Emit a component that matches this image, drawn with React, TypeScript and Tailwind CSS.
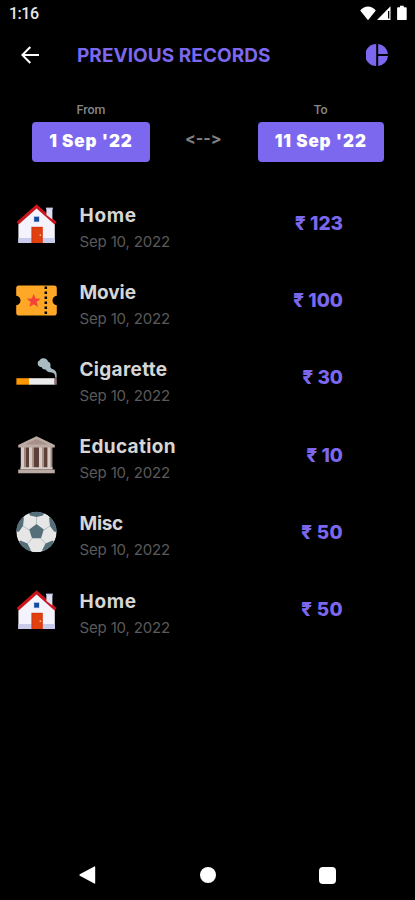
import type { ReactNode } from "react";
import clsx from "clsx";

type RecordItem = {
  name: string;
  nameClass: string;
  date: string;
  amount: string;
  amountClass?: string;
  icon: ReactNode;
};

function HouseIcon() {
  return (
    <svg viewBox="0 0 40 40" className="size-10 overflow-visible">
      <path d="M20.6 2 38.8 19.5V39H2.4V19.5z" fill="#f4f3fc" />
      <path d="M2.4 34h36.4v5H2.4z" fill="#c8cbea" />
      <path d="M20.6.2.6 18l2 2.4 18-16 18 16 2-2.4z" fill="#c9151b" />
      <path d="M30.4 4h6v11.5l-6-4.5z" fill="#dfe0f2" />
      <path d="M30 3.6h6.8v1.6H30z" fill="#c9cbea" />
      <path d="M15.4 22.8h11.4V39H15.4z" fill="#d6380f" />
      <path d="M16.8 24.2h8.6V39h-8.6z" fill="#e0410f" />
      <circle cx="24.4" cy="31.2" r="0.9" fill="#ffb27a" />
      <path d="M17.6 12.2h6v6h-6z" fill="#bcd0f0" />
      <path d="M18.2 12.8h4.8v4.8h-4.8z" fill="#134a9c" />
    </svg>
  );
}

function TicketIcon() {
  return (
    <svg viewBox="0 0 40 40" className="size-10 overflow-visible">
      <path
        d="M3 4.4h35a2.8 2.8 0 0 1 2.8 2.8v7.6c-2.6.4-4.3 2.2-4.3 4.7s1.7 4.3 4.3 4.7v7.6a2.8 2.8 0 0 1-2.8 2.8H3a2.8 2.8 0 0 1-2.8-2.8v-7.6c2.6-.4 4.3-2.2 4.3-4.7S2.8 15.2.2 14.8V7.2A2.8 2.8 0 0 1 3 4.4z"
        fill="#ffa726"
      />
      <path d="M29.8 5.5v29" stroke="#000" strokeWidth="2.5" strokeDasharray="2.5 2.5" />
      <path
        d="m17.7 12.8 1.9 4.7 5 .3-3.9 3.2 1.3 4.9-4.3-2.7-4.3 2.7 1.3-4.9-3.9-3.2 5-.3z"
        fill="#f44336"
      />
    </svg>
  );
}

function CigaretteIcon() {
  return (
    <svg viewBox="0 0 40 40" className="size-10 overflow-visible">
      <path
        d="M27 .2c2.6-.2 4.5 1.2 5 3.4 2 .6 2.9 2.4 2.4 4.3-.1 1.6.5 2.6 1.9 3 2.7.8 4.2 2.6 4.3 5.2l.1 3.6h-1.5c.1-3.3-.8-5-3.5-5.2-3 0-5.1-1-6-3-1.8.3-3.4-.5-3.9-2.2-2-.1-4-1.4-4.1-3.5 0-2 .8-3.2 2.2-3.5C24.2 1 25.4.3 27 .2z"
        fill="#a9bcc3"
      />
      <path d="M.4 20.2h13v6.5H.4z" fill="#ff9800" />
      <path d="M13 20.2h26v6.5H13z" fill="#ececec" />
      <path d="M38.2 20.2h2.6v6.5h-2.6z" fill="#8c7375" />
    </svg>
  );
}

function BankIcon() {
  return (
    <svg viewBox="0 0 40 40" className="size-10 overflow-visible">
      <path d="M5.5 11h30v22h-30z" fill="#5d4037" />
      <path d="M4.8 12h4.8v21H4.8zM13 12h4.8v21H13zM23 12h4.8v21H23zM31.4 12h4.8v21h-4.8z" fill="#d7ccc8" />
      <path d="M8 12h1.6v21H8zM16.2 12h1.6v21h-1.6zM26.2 12h1.6v21h-1.6zM34.6 12h1.6v21h-1.6z" fill="#a1887f" />
      <path d="M20.5 1.2 38.8 10v2.6H2.2V10z" fill="#bcaaa4" />
      <path d="M20.5 4 32 9.6H9z" fill="#a89189" />
      <path d="M4.4 32.2h32.2v2.2H4.4z" fill="#d7ccc8" />
      <path d="M2.2 34.4h36.6v3.8H2.2z" fill="#bcaaa4" />
    </svg>
  );
}

function BallIcon() {
  return (
    <svg viewBox="0 0 40 40" className="size-10 overflow-visible">
      <defs>
        <clipPath id="ball">
          <circle cx="20.5" cy="20" r="20.2" />
        </clipPath>
      </defs>
      <g clipPath="url(#ball)">
        <circle cx="20.5" cy="20" r="20.2" fill="#e6e6e6" />
        <path
          d="M20.5 12V4M28 18l6-4M25 26.5l4.5 5M16 26.5l-4.5 5M13 18l-6-4"
          stroke="#b4bcc0"
          fill="none"
        />
        <path d="m20.5 12 7.3 5.5-2.8 8.7h-9l-2.8-8.7z" fill="#546e7a" />
        <path
          d="M12-1h17l-2 4.5L20.5 5 14 3.5zM-1 7 8 5.5 7 14l-4 5.5-5 1zM42 7l-9-1.5 1 8.5 4 5.5 5 1zM4.5 28.500l7 3 3 6 .5 4H6l-6-9zM36.5 28.500l-7 3-3 6-.5 4h9l6-9z"
          fill="#546e7a"
        />
      </g>
    </svg>
  );
}

const records: RecordItem[] = [
  { name: "Home", nameClass: "tracking-[0.7px]", date: "Sep 10, 2022", amount: "123", icon: <HouseIcon /> },
  { name: "Movie", nameClass: "tracking-[-0.1px]", date: "Sep 10, 2022", amount: "100", icon: <TicketIcon /> },
  { name: "Cigarette", nameClass: "tracking-[0.3px]", date: "Sep 10, 2022", amount: "30", icon: <CigaretteIcon /> },
  { name: "Education", nameClass: "tracking-[0.35px]", date: "Sep 10, 2022", amount: "10", icon: <BankIcon /> },
  { name: "Misc", nameClass: "tracking-[-0.3px]", date: "Sep 10, 2022", amount: "50", amountClass: "tracking-[0.3px]", icon: <BallIcon /> },
  { name: "Home", nameClass: "tracking-[0.7px]", date: "Sep 10, 2022", amount: "50", amountClass: "tracking-[0.3px]", icon: <HouseIcon /> },
];

function StatusBar() {
  return (
    <div className="flex h-7 items-center pl-[9px] pr-[7px]">
      <span className="font-[Roboto] text-base font-medium leading-none tracking-[-0.5px] text-[#e8e8e8]">1:16</span>
      <svg viewBox="0 0 48 16" className="ml-auto mt-[-2px] h-4 w-12 fill-white">
        <path d="M8 15.2.2 5.400C4.6.3 11.4.3 15.8 5.4z" />
        <path d="M17 15 30.500 1.200V15zM28 6v7.500h1.300V6z" fillRule="evenodd" />
        <path d="M40 .8h3.800v1.500h2a.9.9 0 0 1 .9.9v11a.9.9 0 0 1-.9.9H38a.9.9 0 0 1-.9-.9v-11a.9.9 0 0 1 .9-.9h2z" />
      </svg>
    </div>
  );
}

function Header() {
  return (
    <header className="flex h-[54px] items-center pl-[21px] pr-[27px]">
      <svg viewBox="0 0 18 18" className="size-[18px] fill-none stroke-white stroke-2">
        <path d="M18 9H1.8M9.3 1 1.3 9l8 8" />
      </svg>
      <h1 className="ml-[38px] pt-px text-[19px] font-bold leading-none tracking-[0.05px] text-[#7b68ee]">
        PREVIOUS RECORDS
      </h1>
      <svg viewBox="0 0 22 22" className="ml-auto size-[22px] fill-[#7b68ee]">
        <path d="M10.2 0v22a11 11 0 0 1 0-22zM12.2 0A11 11 0 0 1 22 9.9h-9.800zM12.2 12.1H22A11 11 0 0 1 12.2 22z" />
      </svg>
    </header>
  );
}

function DatePick({ label, value, className }: { label: string; value: string; className: string }) {
  return (
    <div className={clsx("flex flex-col items-center", className)}>
      <span className="h-[19px] font-[Roboto] text-[12.5px] font-medium leading-[13px] text-[#858585]">{label}</span>
      <button className="h-[39.5px] w-full rounded bg-[#7b68ee] text-[17px] font-black leading-none tracking-[0.9px] text-white">
        {value}
      </button>
    </div>
  );
}

function RecordRow({ item }: { item: RecordItem }) {
  return (
    <li className="flex h-[77.2px] items-center pl-4 pr-[72px]">
      {item.icon}
      <div className="ml-[23.5px] pt-[10px]">
        <p className={clsx("text-[19px] font-bold leading-6 text-[#d6d6d6]", item.nameClass)}>{item.name}</p>
        <p className="mt-0.5 text-[15px] leading-6 tracking-[-0.15px] text-[#5a5a5a]">{item.date}</p>
      </div>
      <p className={clsx("ml-auto text-[19px] font-extrabold leading-none text-[#7b68ee]", item.amountClass)}>
        ₹ {item.amount}
      </p>
    </li>
  );
}

export default function App() {
  return (
    <div className="flex h-[900px] w-[415px] flex-col overflow-hidden bg-black font-[Inter,sans-serif]">
      <StatusBar />
      <Header />
      <section className="flex h-[103px] items-start pl-8 pr-[31px] pt-[21px]">
        <DatePick label="From" value="1 Sep '22" className="w-[118px]" />
        {/* contextual alternates off, so Inter keeps the plain characters */}
        <span className="flex-1 pr-px pt-[27px] text-center text-base font-bold leading-4 text-[#808080] [font-feature-settings:'calt'_0]">
          {"<-->"}
        </span>
        <DatePick label="To" value="11 Sep '22" className="w-[126.5px]" />
      </section>
      <ul className="flex flex-1 flex-col">
        {records.map((item, i) => (
          <RecordRow key={i} item={item} />
        ))}
      </ul>
      <nav className="flex h-[50px] items-center pl-[79px]">
        <svg viewBox="0 0 17 18" className="h-[18px] w-[17px] fill-white">
          <path d="M.8 8.2 15.3.4q.9-.3.9.7v15.9q0 1-.9.5L.8 9.7q-.9-.7 0-1.5z" />
        </svg>
        <span className="ml-[103.5px] size-[16.5px] rounded-full bg-white" />
        <span className="ml-[102.5px] size-[17px] rounded-sm bg-white" />
      </nav>
    </div>
  );
}
